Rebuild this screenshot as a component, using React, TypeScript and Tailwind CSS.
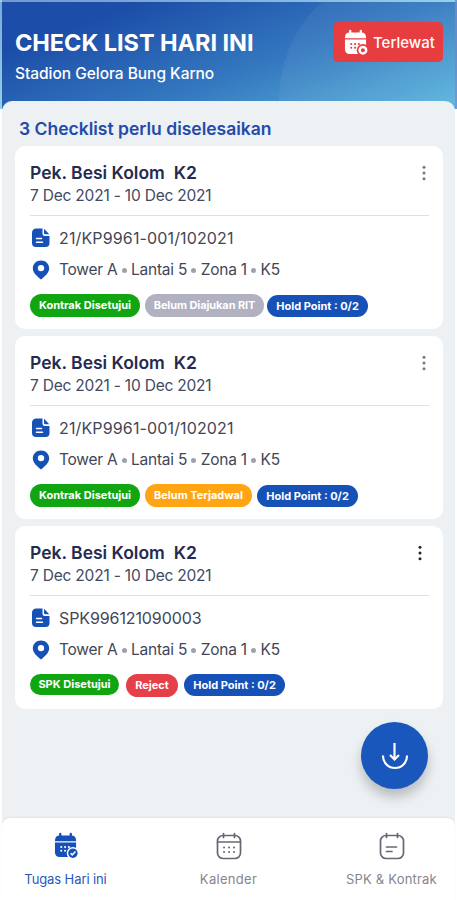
import { clsx } from "clsx";

interface Tag {
  label: string;
  className: string;
}

interface Task {
  code: string;
  codeClass: string;
  menuClass: string;
  tags: Tag[];
}

const tasks: Task[] = [
  {
    code: "21/KP9961-001/102021",
    codeClass: "tracking-[0.14px]",
    menuClass: "mr-[3px] text-[#777783]",
    tags: [
      { label: "Kontrak Disetujui", className: "h-[23px] w-[110px] bg-[#11a611]" },
      { label: "Belum Diajukan RIT", className: "ml-[5px] h-[23px] w-[119px] bg-[#b1b1c1] tracking-[-0.1px]" },
      { label: "Hold Point : 0/2", className: "ml-[3px] mt-px h-[22px] w-[101px] bg-[#1651b8]" },
    ],
  },
  {
    code: "21/KP9961-001/102021",
    codeClass: "tracking-[0.14px]",
    menuClass: "mr-[3px] text-[#777783]",
    tags: [
      { label: "Kontrak Disetujui", className: "h-[23px] w-[110px] bg-[#11a611]" },
      { label: "Belum Terjadwal", className: "ml-[5px] h-[23px] w-[107px] bg-[#ffa412]" },
      { label: "Hold Point : 0/2", className: "ml-[5px] mt-px h-[22px] w-[101px] bg-[#1651b8]" },
    ],
  },
  {
    code: "SPK996121090003",
    codeClass: "tracking-[-0.1px]",
    menuClass: "mr-[7px] text-[#25252d]",
    tags: [
      { label: "SPK Disetujui", className: "h-[21px] w-[89px] bg-[#11a611]" },
      { label: "Reject", className: "ml-[7px] h-[23px] w-[52px] bg-[#e5404a]" },
      { label: "Hold Point : 0/2", className: "ml-[6px] h-[22px] w-[101px] bg-[#1651b8]" },
    ],
  },
];

function DocumentIcon() {
  return (
    <svg width="18" height="20" viewBox="0 0 18 20">
      <path d="M4.5 0.5H10.5V5.5Q10.5 8 13 8H17.5V15Q17.5 19 13.5 19H4Q0 19 0 15V5Q0 0.5 4.5 0.5Z" fill="#1651b8" />
      <path d="M12 0.8L17.3 6.3H13.5Q12 6.3 12 5Z" fill="#1651b8" />
      <path d="M4.5 10.5H9.5M4.5 14.3H10.5" stroke="white" strokeWidth="1.5" strokeLinecap="round" />
    </svg>
  );
}

function PinIcon() {
  return (
    <svg width="18" height="20" viewBox="0 0 18 20">
      <path
        fillRule="evenodd"
        d="M9 0.5C4.3 0.5 0.8 4 0.8 8.3C0.8 13.4 6 16.7 8 18.8Q9 19.8 10 18.8C12 16.7 17.2 13.4 17.2 8.3C17.2 4 13.7 0.5 9 0.5ZM9 4.9A3.2 3.2 0 1 1 9 11.3A3.2 3.2 0 1 1 9 4.9Z"
        fill="#1651b8"
      />
    </svg>
  );
}

function DotsIcon({ className }: { className: string }) {
  return (
    <svg width="4" height="16" viewBox="0 0 4 16" fill="currentColor" className={className}>
      <circle cx="2" cy="2.2" r="1.5" />
      <circle cx="2" cy="8" r="1.5" />
      <circle cx="2" cy="13.8" r="1.5" />
    </svg>
  );
}

function CalendarSolid({ color, hole, check }: { color: string; hole: string; check?: boolean }) {
  return (
    <svg width="24" height="27" viewBox="0 0 25 28">
      <path d="M6.5 2V6M17.5 2V6" stroke={color} strokeWidth="2.4" strokeLinecap="round" />
      <path d="M1 9Q1 3.5 6 3.5H18Q23 3.5 23 9V9.5H1Z" fill={color} />
      <path d="M1 11H23V26H6Q1 26 1 21Z" fill={color} />
      <path d="M7.5 15.5H7.6M11.5 15.5H11.6M15.5 15.5H15.6M7.5 19.5H7.6M11.5 19.5H11.6" stroke={hole} strokeWidth="2.1" strokeLinecap="round" />
      <circle cx="19.7" cy="22" r="6.4" fill={hole} />
      {check ? (
        <>
          <circle cx="19.7" cy="22" r="4.9" fill={color} />
          <path d="M17.3 22.1L19 23.8L22.3 20.3" stroke={hole} strokeWidth="1.6" fill="none" />
        </>
      ) : (
        <circle cx="19.7" cy="22" r="3.4" stroke={color} strokeWidth="2.6" fill="none" />
      )}
    </svg>
  );
}

function CalendarOutline({ note }: { note?: boolean }) {
  return (
    <svg width="26" height="28" viewBox="0 0 26 28" fill="none" stroke="#686675" strokeWidth="1.7" strokeLinecap="round">
      <rect x="1.5" y="3.5" width="23" height="23" rx="5.5" />
      <path d="M7.5 1.5V5.5M18.5 1.5V5.5" />
      {note ? (
        <path d="M7.5 15H17.5M7.5 19.5H13" />
      ) : (
        <>
          <path d="M1.5 10H24.5" />
          <path d="M8 15.5H8.1M13 15.5H13.1M18 15.5H18.1M8 20H8.1M13 20H13.1M18 20H18.1" strokeWidth="1.9" />
        </>
      )}
    </svg>
  );
}

function Bullet() {
  return <span className="mx-[4.3px] size-[5px] rounded-full bg-[#a0a0aa]" />;
}

function TaskCard({ task }: { task: Task }) {
  return (
    <article className="h-[183px] rounded-[10px] bg-white pr-[14px] pl-[15px] pt-[15px]">
      <div className="flex h-[55px] items-start justify-between border-b-[1.5px] border-[#e0e0e4]">
        <div className="whitespace-nowrap text-[#252b50]">
          <h3 className="text-[17.5px] leading-[23px] font-semibold">Pek. Besi Kolom&nbsp; K2</h3>
          <p className="text-[15.5px] leading-[23px] text-[#434963] tracking-[-0.2px]">7 Dec 2021 - 10 Dec 2021</p>
        </div>
        <DotsIcon className={clsx("mt-[4px]", task.menuClass)} />
      </div>
      <div className="flex h-[30px] items-center pt-[14px] pl-[2px] text-[16px] whitespace-nowrap text-[#434657]">
        <DocumentIcon />
        <span className={clsx("ml-[9px]", task.codeClass)}>{task.code}</span>
      </div>
      <div className="mt-[8px] flex h-[32px] items-center pl-[2px] text-[15.5px] whitespace-nowrap text-[#434657]">
        <PinIcon />
        <div className="ml-[9px] flex items-center tracking-[-0.24px]">
          Tower A<Bullet />Lantai 5<Bullet />Zona 1<Bullet />K5
        </div>
      </div>
      <div className="mt-[8px] flex items-start">
        {task.tags.map((tag) => (
          <span
            key={tag.label}
            className={clsx(
              "flex shrink-0 items-center justify-center rounded-full text-[11px] font-bold whitespace-nowrap text-white",
              tag.className,
            )}
          >
            {tag.label}
          </span>
        ))}
      </div>
    </article>
  );
}

export default function App() {
  return (
    <div className="relative flex h-[900px] w-[457px] flex-col overflow-hidden bg-white px-[2px] font-['Inter','Liberation_Sans',sans-serif]">
      <header className="relative -mx-[2px] h-[109px] shrink-0 border-x-2 border-t-2 border-white/35 bg-[linear-gradient(160deg,#1c4da8_18%,#3478bf_58%,#5cb7de_100%)]">
        <svg className="absolute inset-0" width="453" height="107" viewBox="0 0 453 107">
          <path d="M277 107C275 65 292 22 321 0H453V107Z" fill="white" opacity="0.05" />
        </svg>
        <div className="relative flex justify-between pr-[12px] pl-[13px] pt-[20px] whitespace-nowrap text-white">
          <div>
            <h1 className="mt-[5px] text-[23.5px] leading-[32px] font-bold tracking-[-0.05px]">CHECK LIST HARI INI</h1>
            <p className="mt-[4px] text-[15.5px] leading-[22px] font-medium tracking-[-0.04px]">Stadion Gelora Bung Karno</p>
          </div>
          <button className="flex h-[40px] w-[110px] items-center rounded-[5px] bg-[#e73c40] pl-[11px] text-[15px] font-medium">
            <CalendarSolid color="white" hole="#e73c40" />
            <span className="ml-[5px] pt-[3px]">Terlewat</span>
          </button>
        </div>
      </header>

      <main className="relative -mt-[8px] h-[724px] shrink-0 rounded-t-[10px] bg-[#edf1f4] pr-[12px] pl-[13px]">
        <h2 className="h-[45px] pt-[16px] pl-[4px] text-[17.5px] leading-[24px] font-semibold whitespace-nowrap text-[#224bab]">
          3 Checklist perlu diselesaikan
        </h2>
        <div className="flex flex-col gap-[7px]">
          {tasks.map((task, i) => (
            <TaskCard key={i} task={task} />
          ))}
        </div>
        <button className="absolute top-[621px] left-[359px] flex size-[67px] items-center justify-center rounded-full bg-[#1957bd] shadow-[0_8px_12px_rgba(0,0,0,0.22)]">
          <svg width="28" height="28" viewBox="0 0 28 28" fill="none" stroke="white" strokeWidth="2.2">
            <path d="M13.5 1V17M9 13L13.5 17.5L18 13" />
            <path d="M2 13.5V14A12 12 0 0 0 26 14V13.5" />
          </svg>
        </button>
      </main>

      <nav className="relative -mt-[7px] flex h-[83px] shrink-0 rounded-t-[8px] bg-white text-[13px] text-[#85858e] shadow-[0_-1px_2px_rgba(0,0,0,0.05)]">
        <div className="flex w-[127px] flex-col items-center pt-[14px] text-[#2858bb]">
          <CalendarSolid color="#1651b8" hole="white" check />
          <span className="mt-[10px] leading-[20px] tracking-[-0.1px]">Tugas Hari ini</span>
        </div>
        <div className="flex w-[199px] flex-col items-center pt-[14px]">
          <CalendarOutline />
          <span className="mt-[9px] leading-[20px] tracking-[0.3px]">Kalender</span>
        </div>
        <div className="flex w-[127px] flex-col items-center pt-[14px]">
          <CalendarOutline note />
          <span className="mt-[9px] leading-[20px] tracking-[0.2px]">SPK &amp; Kontrak</span>
        </div>
      </nav>
    </div>
  );
}
